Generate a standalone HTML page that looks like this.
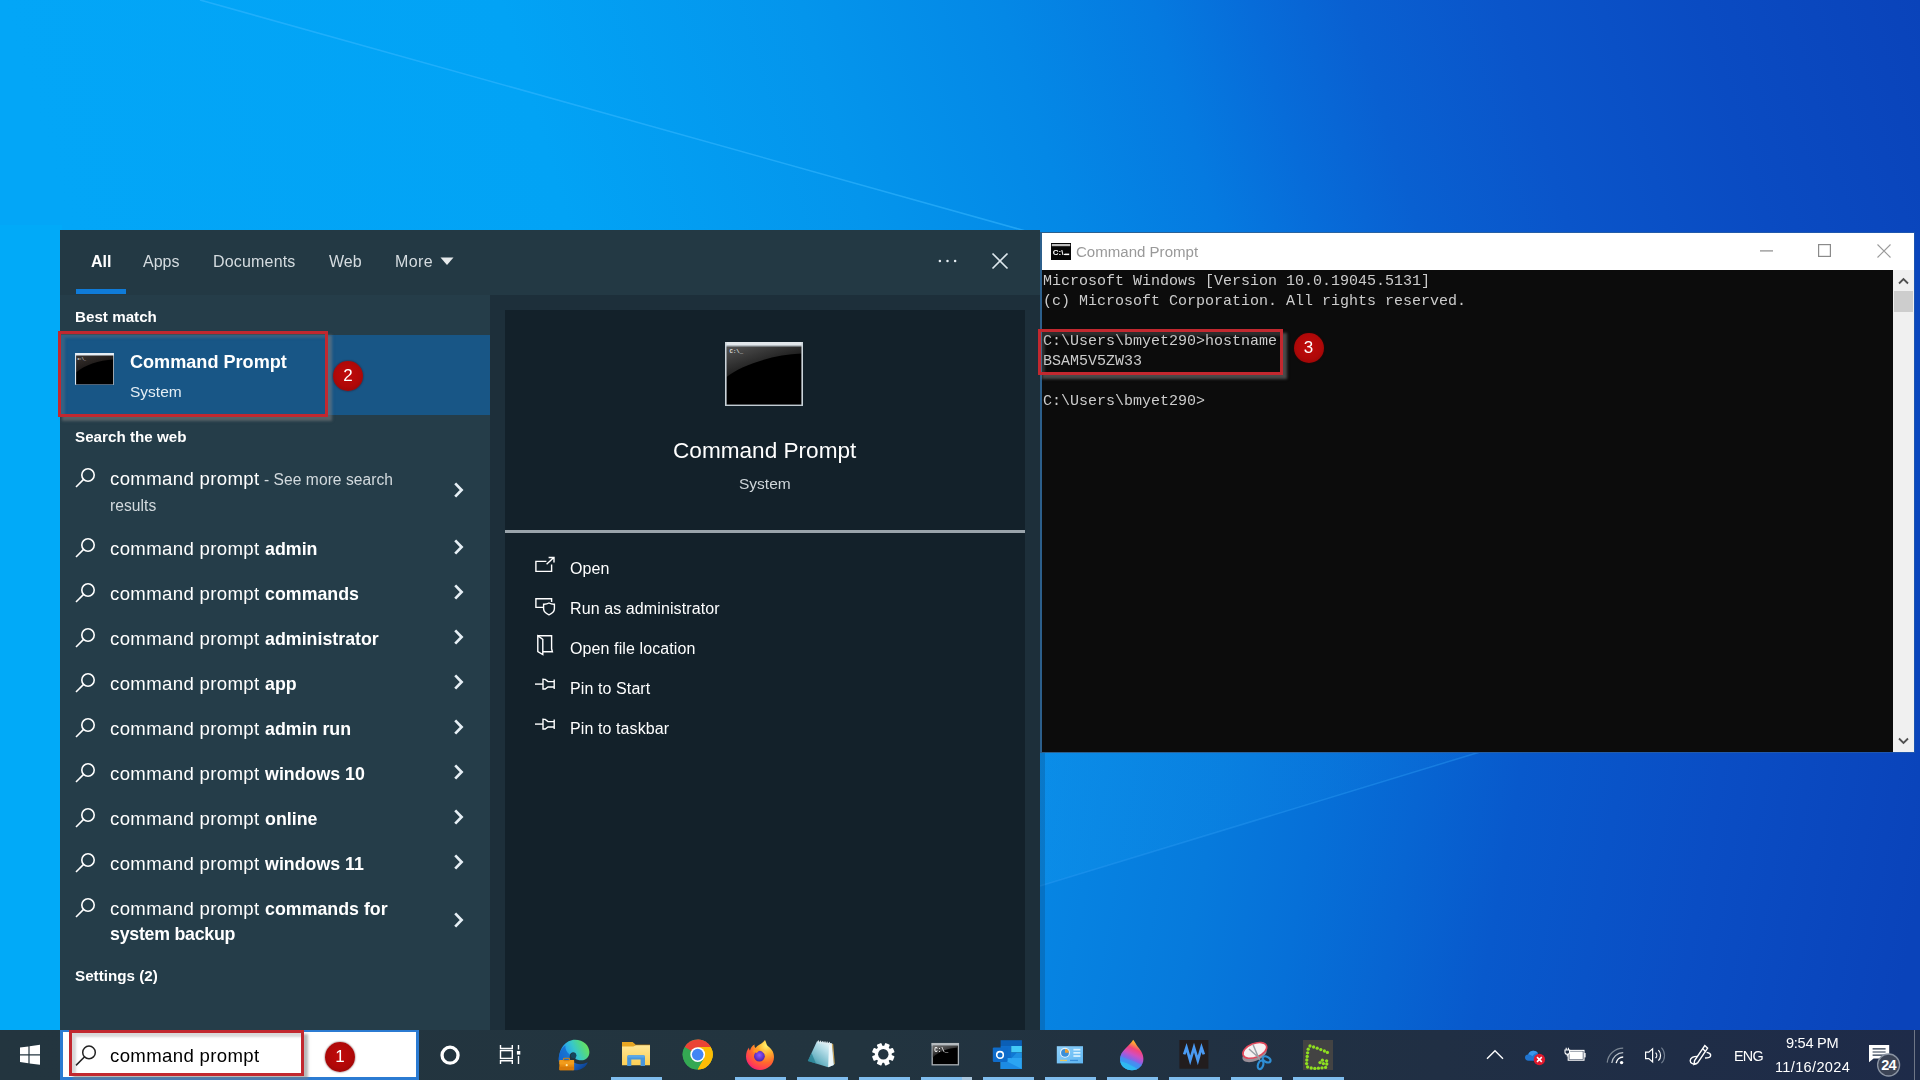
<!DOCTYPE html>
<html lang="en">
<head>
<meta charset="utf-8">
<title>Command Prompt - hostname</title>
<style>
*{box-sizing:border-box;margin:0;padding:0}
html,body{width:1920px;height:1080px;overflow:hidden}
body{font-family:"Liberation Sans",sans-serif;color:#fff;position:relative;background:#0a60d0}
.abs{position:absolute}
.t{position:absolute;white-space:nowrap;line-height:1;will-change:transform}
#wall{position:absolute;left:0;top:0;width:1920px;height:1080px}
/* search panel */
#panel{position:absolute;left:60px;top:230px;width:980px;height:800px;background:#233944}
#leftcol{position:absolute;left:0;top:65px;width:430px;height:735px;background:#253d49}
#rightpane{position:absolute;left:430px;top:65px;width:550px;height:735px;background:#1d2f3a}
#card1{position:absolute;left:445px;top:80px;width:520px;height:220px;background:#13212a}
#card2{position:absolute;left:445px;top:303px;width:520px;height:497px;background:#13212a}
#sep{position:absolute;left:445px;top:300px;width:520px;height:3px;background:#9aa4ab}
#sel{position:absolute;left:0;top:105px;width:430px;height:80px;background:#185686}
#tabline{position:absolute;left:16px;top:59px;width:50px;height:5px;background:#0f7bd8}
.redbox{position:absolute;border:3px solid #c2282f;box-shadow:4px 4px 2.5px rgba(125,125,125,.55),inset 4px 4px 2.5px rgba(125,125,125,.3)}
.badge{position:absolute;width:30px;height:30px;border-radius:50%;background:radial-gradient(circle at 50% 45%,#c00a0a 0,#b00808 55%,#8a0505 100%);color:#fff;font-size:17px;line-height:30px;text-align:center;box-shadow:0 0 2px rgba(60,0,0,.8)}

.b{font-weight:bold}
.tab{margin-top:.5px;font-size:16px;color:#d5dce0}
.tab.b{color:#fff}
.hd{font-size:15.2px;font-weight:bold;color:#fff}
.act{font-size:16px;letter-spacing:.1px;color:#fff}
.sg{font-size:18px;color:#fff}
.see{font-size:15.6px;color:#d3dade;letter-spacing:.05px}
.rg{font-size:18.6px;letter-spacing:.35px}
.sg b{font-size:17.8px}
/* cmd */
#cmd{position:absolute;left:1040px;top:232px;width:875px;height:521px;background:linear-gradient(90deg,#2c5f8b 0,#2a64a0 30%,#1d55b0 100%)}
#cmdtitle{position:absolute;left:2px;top:1px;width:872px;height:37px;background:#fff}
#con{position:absolute;left:2px;top:38px;width:851px;height:482px;background:#0c0c0c}
#sb{position:absolute;left:853px;top:38px;width:21px;height:482px;background:#f0f0f0}
#thumb{position:absolute;left:1px;top:21px;width:19px;height:21px;background:#cdcdcd}
.mono{font-family:"Liberation Mono",monospace;font-size:15px;color:#ccc;position:absolute;left:.5px;margin-top:2px;will-change:transform;white-space:pre;line-height:20px}
/* taskbar */

#tb{position:absolute;left:0;top:1030px;width:1920px;height:50px;background:linear-gradient(90deg,#23353f 0%,#22343f 45%,#202f44 75%,#1e2b49 100%)}
#sbox{position:absolute;left:60px;top:0;width:359px;height:50px;background:#fff;border:3px solid #2b7bd2;border-top-width:2px}
.ico{top:9px;will-change:transform}
.ind{position:absolute;top:47px;height:3px;width:51px;background:#7fbdee}
.tr{color:#fff}
</style>
</head>
<body>
<svg id="wall" viewBox="0 0 1920 1080" preserveAspectRatio="none">
<defs>
<linearGradient id="wg" gradientUnits="userSpaceOnUse" x1="0" y1="0" x2="1759.8" y2="-531.0"><stop offset="0.0000" stop-color="#03a6f7"/><stop offset="0.2604" stop-color="#02a3f5"/><stop offset="0.4167" stop-color="#0495ec"/><stop offset="0.5208" stop-color="#0488e6"/><stop offset="0.5990" stop-color="#057ae0"/><stop offset="0.6510" stop-color="#076cd9"/><stop offset="0.7031" stop-color="#0960d1"/><stop offset="0.7812" stop-color="#0a55ca"/><stop offset="0.8854" stop-color="#0a4bc2"/><stop offset="1.0000" stop-color="#0a43ba"/></linearGradient>
<linearGradient id="wg2" gradientUnits="userSpaceOnUse" x1="0" y1="890" x2="1860.7" y2="1222.3"><stop offset="0.0000" stop-color="#00adf9"/><stop offset="0.4688" stop-color="#0590ea"/><stop offset="0.5417" stop-color="#0685e3"/><stop offset="0.6250" stop-color="#067adc"/><stop offset="0.6771" stop-color="#0670d8"/><stop offset="0.7292" stop-color="#0765d2"/><stop offset="0.7812" stop-color="#0859cc"/><stop offset="0.8854" stop-color="#0a4dc4"/><stop offset="1.0000" stop-color="#0a43ba"/></linearGradient>
<linearGradient id="bm" x1="0" y1="0" x2="1" y2="0"><stop offset="0" stop-color="#22b0ff" stop-opacity=".16"/><stop offset="1" stop-color="#22b0ff" stop-opacity=".05"/></linearGradient>
</defs>
<rect width="1920" height="1080" fill="url(#wg2)"/>
<rect width="1920" height="500" fill="url(#wg)"/>
<rect x="0" y="225" width="62" height="810" fill="#01aaf8"/>
<path d="M200 0L1040 235" stroke="#39b8ff" stroke-opacity=".55" stroke-width="1.6" fill="none"/>
<path d="M1040 752H1480L1040 886Z" fill="url(#bm)"/>
<path d="M1480 752L1040 886" stroke="#2a98f2" stroke-opacity=".45" stroke-width="1.5" fill="none"/>
<rect x="1040" y="752" width="5" height="280" fill="#063a6a" opacity=".25"/>
</svg>

<div id="panel">
 <div id="leftcol"></div>
 <div id="rightpane"></div>
 <div id="card1"></div><div id="sep"></div><div id="card2"></div>
 <div id="sel"></div>
 <div id="tabline"></div>
 <!-- tabs -->
 <span class="t tab b" id="t_all" style="left:31px;top:23px">All</span>
 <span class="t tab" id="t_apps" style="left:83px;top:23px">Apps</span>
 <span class="t tab" id="t_docs" style="left:153px;top:23px;letter-spacing:.18px">Documents</span>
 <span class="t tab" id="t_web" style="left:269px;top:23px">Web</span>
 <span class="t tab" id="t_more" style="left:335px;top:23px;letter-spacing:.4px">More</span>
 <svg class="abs" style="left:380px;top:27px" width="14" height="9" viewBox="0 0 14 9"><path d="M0.5 0.5H13.5L7 8Z" fill="#e6eaec"/></svg>
 <svg class="abs" style="left:877px;top:28px" width="22" height="6" viewBox="0 0 22 6"><circle cx="2.9" cy="3" r="1.25" fill="#e6eef3"/><circle cx="10.5" cy="3" r="1.25" fill="#e6eef3"/><circle cx="18.1" cy="3" r="1.25" fill="#e6eef3"/></svg>
 <svg class="abs" style="left:931px;top:21.8px" width="18" height="18" viewBox="0 0 18 18"><path d="M1.5 1.5L16.5 16.5M16.5 1.5L1.5 16.5" stroke="#dde7ed" stroke-width="1.7" fill="none"/></svg>
 <!-- headers -->
 <span class="t hd" id="h_best" style="left:15px;top:78.5px">Best match</span>
 <span class="t hd" id="h_web" style="left:15px;top:198.5px">Search the web</span>
 <span class="t hd" id="h_set" style="left:15px;top:738px">Settings (2)</span>
 <!-- best match item -->
 <svg class="abs" style="left:14.8px;top:122.6px" width="39.4" height="32.8" viewBox="0 0 39.4 32.8"><defs><linearGradient id="ch1" x1="0" y1="0" x2="0.7" y2="1"><stop offset="0" stop-color="#3b3431"/><stop offset="1" stop-color="#0d0b0a"/></linearGradient></defs><rect width="39.4" height="32.8" fill="#000"/><path d="M1 2H38.4V6.6C24 7.4 9 12.4 1 19.6Z" fill="url(#ch1)"/><rect width="39.4" height="2.5" fill="#e6eef5"/><rect width="1.1" height="32.8" fill="#dbe7f1"/><rect x="38.3" width="1.1" height="32.8" fill="#dbe7f1"/><rect y="31.4" width="39.4" height="1.4" fill="#86a3c0"/><text x="2.4" y="6.9" font-family="Liberation Mono, monospace" font-size="3.6" font-weight="bold" fill="#e8e8e8">C:\_</text></svg>
 <span class="t b" id="bm_title" style="left:70px;top:123px;font-size:18.1px">Command Prompt</span>
 <span class="t" id="bm_sub" style="left:70px;top:154px;font-size:15.5px;color:#e4eef5">System</span>
 <!-- suggestions -->
 <svg class="abs" style="left:15px;top:237.2px" width="21" height="21" viewBox="0 0 21 21"><circle cx="13" cy="8" r="6.2" stroke="#fff" stroke-width="1.6" fill="none"/><path d="M8.6 12.4L1 20" stroke="#fff" stroke-width="1.6" fill="none"/></svg>
 <span class="t sg" id="s0" style="left:50px;top:240.3px"><span class="rg">command prompt</span><span class="see" id="s0b"> - See more search</span></span>
 <span class="t see" id="s0c" style="left:50px;top:268.2px">results</span>
 <svg class="abs" style="left:393px;top:252.4px" width="11" height="16" viewBox="0 0 11 16"><path d="M2.2 1.4L8.6 8L2.2 14.6" stroke="#e6eff5" stroke-width="2.7" fill="none"/></svg>
 <svg class="abs" style="left:15px;top:307.2px" width="21" height="21" viewBox="0 0 21 21"><circle cx="13" cy="8" r="6.2" stroke="#fff" stroke-width="1.6" fill="none"/><path d="M8.6 12.4L1 20" stroke="#fff" stroke-width="1.6" fill="none"/></svg>
 <span class="t sg" id="s1" style="left:50px;top:309.8px"><span class="rg">command prompt </span><b>admin</b></span>
 <svg class="abs" style="left:393px;top:309.4px" width="11" height="16" viewBox="0 0 11 16"><path d="M2.2 1.4L8.6 8L2.2 14.6" stroke="#e6eff5" stroke-width="2.7" fill="none"/></svg>
 <svg class="abs" style="left:15px;top:352.2px" width="21" height="21" viewBox="0 0 21 21"><circle cx="13" cy="8" r="6.2" stroke="#fff" stroke-width="1.6" fill="none"/><path d="M8.6 12.4L1 20" stroke="#fff" stroke-width="1.6" fill="none"/></svg>
 <span class="t sg" id="s2" style="left:50px;top:354.8px"><span class="rg">command prompt </span><b>commands</b></span>
 <svg class="abs" style="left:393px;top:354.4px" width="11" height="16" viewBox="0 0 11 16"><path d="M2.2 1.4L8.6 8L2.2 14.6" stroke="#e6eff5" stroke-width="2.7" fill="none"/></svg>
 <svg class="abs" style="left:15px;top:397.2px" width="21" height="21" viewBox="0 0 21 21"><circle cx="13" cy="8" r="6.2" stroke="#fff" stroke-width="1.6" fill="none"/><path d="M8.6 12.4L1 20" stroke="#fff" stroke-width="1.6" fill="none"/></svg>
 <span class="t sg" id="s3" style="left:50px;top:399.8px"><span class="rg">command prompt </span><b>administrator</b></span>
 <svg class="abs" style="left:393px;top:399.4px" width="11" height="16" viewBox="0 0 11 16"><path d="M2.2 1.4L8.6 8L2.2 14.6" stroke="#e6eff5" stroke-width="2.7" fill="none"/></svg>
 <svg class="abs" style="left:15px;top:442.2px" width="21" height="21" viewBox="0 0 21 21"><circle cx="13" cy="8" r="6.2" stroke="#fff" stroke-width="1.6" fill="none"/><path d="M8.6 12.4L1 20" stroke="#fff" stroke-width="1.6" fill="none"/></svg>
 <span class="t sg" id="s4" style="left:50px;top:444.8px"><span class="rg">command prompt </span><b>app</b></span>
 <svg class="abs" style="left:393px;top:444.4px" width="11" height="16" viewBox="0 0 11 16"><path d="M2.2 1.4L8.6 8L2.2 14.6" stroke="#e6eff5" stroke-width="2.7" fill="none"/></svg>
 <svg class="abs" style="left:15px;top:487.2px" width="21" height="21" viewBox="0 0 21 21"><circle cx="13" cy="8" r="6.2" stroke="#fff" stroke-width="1.6" fill="none"/><path d="M8.6 12.4L1 20" stroke="#fff" stroke-width="1.6" fill="none"/></svg>
 <span class="t sg" id="s5" style="left:50px;top:489.8px"><span class="rg">command prompt </span><b>admin run</b></span>
 <svg class="abs" style="left:393px;top:489.4px" width="11" height="16" viewBox="0 0 11 16"><path d="M2.2 1.4L8.6 8L2.2 14.6" stroke="#e6eff5" stroke-width="2.7" fill="none"/></svg>
 <svg class="abs" style="left:15px;top:532.2px" width="21" height="21" viewBox="0 0 21 21"><circle cx="13" cy="8" r="6.2" stroke="#fff" stroke-width="1.6" fill="none"/><path d="M8.6 12.4L1 20" stroke="#fff" stroke-width="1.6" fill="none"/></svg>
 <span class="t sg" id="s6" style="left:50px;top:534.8px"><span class="rg">command prompt </span><b>windows 10</b></span>
 <svg class="abs" style="left:393px;top:534.4px" width="11" height="16" viewBox="0 0 11 16"><path d="M2.2 1.4L8.6 8L2.2 14.6" stroke="#e6eff5" stroke-width="2.7" fill="none"/></svg>
 <svg class="abs" style="left:15px;top:577.2px" width="21" height="21" viewBox="0 0 21 21"><circle cx="13" cy="8" r="6.2" stroke="#fff" stroke-width="1.6" fill="none"/><path d="M8.6 12.4L1 20" stroke="#fff" stroke-width="1.6" fill="none"/></svg>
 <span class="t sg" id="s7" style="left:50px;top:579.8px"><span class="rg">command prompt </span><b>online</b></span>
 <svg class="abs" style="left:393px;top:579.4px" width="11" height="16" viewBox="0 0 11 16"><path d="M2.2 1.4L8.6 8L2.2 14.6" stroke="#e6eff5" stroke-width="2.7" fill="none"/></svg>
 <svg class="abs" style="left:15px;top:622.2px" width="21" height="21" viewBox="0 0 21 21"><circle cx="13" cy="8" r="6.2" stroke="#fff" stroke-width="1.6" fill="none"/><path d="M8.6 12.4L1 20" stroke="#fff" stroke-width="1.6" fill="none"/></svg>
 <span class="t sg" id="s8" style="left:50px;top:624.8px"><span class="rg">command prompt </span><b>windows 11</b></span>
 <svg class="abs" style="left:393px;top:624.4px" width="11" height="16" viewBox="0 0 11 16"><path d="M2.2 1.4L8.6 8L2.2 14.6" stroke="#e6eff5" stroke-width="2.7" fill="none"/></svg>
 <svg class="abs" style="left:15px;top:667.2px" width="21" height="21" viewBox="0 0 21 21"><circle cx="13" cy="8" r="6.2" stroke="#fff" stroke-width="1.6" fill="none"/><path d="M8.6 12.4L1 20" stroke="#fff" stroke-width="1.6" fill="none"/></svg>
 <span class="t sg" id="s9" style="left:50px;top:669.8px"><span class="rg">command prompt </span><b>commands for</b></span>
 <span class="t sg" id="s9b" style="left:50px;top:694.8px;letter-spacing:-.25px"><b>system backup</b></span>
 <svg class="abs" style="left:393px;top:682.4px" width="11" height="16" viewBox="0 0 11 16"><path d="M2.2 1.4L8.6 8L2.2 14.6" stroke="#e6eff5" stroke-width="2.7" fill="none"/></svg>
 <!-- right pane -->
 <svg class="abs" style="left:665.4px;top:111.6px" width="78" height="64.2" viewBox="0 0 78 64.2"><defs><linearGradient id="ch2" x1="0" y1="0" x2="0.75" y2="1"><stop offset="0" stop-color="#565656"/><stop offset=".6" stop-color="#232323"/><stop offset="1" stop-color="#0c0c0c"/></linearGradient></defs><rect width="78" height="64.2" fill="#000"/><path d="M1.5 3H76.5V11.6C50 12.6 18 22 1.5 35Z" fill="url(#ch2)"/><rect width="78" height="4.2" fill="#e2e7eb"/><rect y="3.4" width="78" height="1" fill="#9aa3aa"/><rect width="1.6" height="64.2" fill="#ccd5db"/><rect x="76.4" width="1.6" height="64.2" fill="#ccd5db"/><rect y="62.6" width="78" height="1.6" fill="#c2ccd3"/><text x="4.6" y="11.4" font-family="Liberation Mono, monospace" font-size="5.6" font-weight="bold" fill="#e0e0e0">C:\_</text></svg>
 <span class="t" id="rp_title" style="left:613px;top:210px;font-size:22.6px">Command Prompt</span>
 <span class="t" id="rp_sub" style="left:679px;top:246px;font-size:15.5px;color:#cfd6da">System</span>

 <!-- action icons -->
 <svg class="abs" style="left:474px;top:326px" width="22" height="17" viewBox="0 0 22 17"><g fill="none" stroke="#fff" stroke-width="1.4"><path d="M12.4 5.4H1.9V15.4H17.6V8.6"/><path d="M12.6 8.2L19.8 1.6M14.6 1.5H20V6.6"/></g></svg>
 <svg class="abs" style="left:474px;top:367px" width="22" height="19" viewBox="0 0 22 19"><g fill="none" stroke="#fff" stroke-width="1.4"><path d="M9.4 10.4H1.9V1.7H17.6V5"/><path d="M15 6C16.6 6.9 18.6 7.3 20.4 7.2V11.6C20.4 14.6 18 16.6 15 17.8C12 16.6 9.6 14.6 9.6 11.6V7.2C11.4 7.3 13.4 6.9 15 6Z"/></g></svg>
 <svg class="abs" style="left:476px;top:404px" width="18" height="22" viewBox="0 0 18 22"><g fill="none" stroke="#fff" stroke-width="1.4" stroke-linejoin="miter"><path d="M1.8 1.8H15.6V14.6L16.4 17.8H6.8"/><path d="M1.8 1.8L6.8 5.4V20.6L1.8 17.6Z"/></g></svg>
 <svg class="abs" style="left:474px;top:448px" width="22" height="13" viewBox="0 0 22 13"><g fill="none" stroke="#fff" stroke-width="1.4"><path d="M1 6.1H9"/><path d="M9 0.6V11.8M9 1.4H11.2L14 3.6H20.2V9H14L11.2 11H9M20.2 1.6V11"/></g></svg>
 <svg class="abs" style="left:474px;top:488px" width="22" height="13" viewBox="0 0 22 13"><g fill="none" stroke="#fff" stroke-width="1.4"><path d="M1 6.1H9"/><path d="M9 0.6V11.8M9 1.4H11.2L14 3.6H20.2V9H14L11.2 11H9M20.2 1.6V11"/></g></svg>
 <span class="t act" id="a1" style="left:510px;top:330.5px">Open</span>
 <span class="t act" id="a2" style="left:510px;top:370.5px">Run as administrator</span>
 <span class="t act" id="a3" style="left:510px;top:410.5px">Open file location</span>
 <span class="t act" id="a4" style="left:510px;top:450.5px">Pin to Start</span>
 <span class="t act" id="a5" style="left:510px;top:490.5px">Pin to taskbar</span>
</div>

<div id="cmd">
 <div id="cmdtitle">
  <svg class="abs" style="left:9px;top:10px;will-change:transform" width="20" height="17" viewBox="0 0 20 17"><rect x="0" y="0" width="20" height="17" fill="#050505"/><rect x="0.8" y="1" width="18.4" height="2.2" fill="#bdbdbd"/><text x="1.8" y="11.6" font-family="Liberation Sans, sans-serif" font-size="8" font-weight="bold" fill="#fff">C:\.</text><rect x="13.6" y="10.6" width="4.6" height="1.5" fill="#fff"/></svg>
  <span class="t" id="cmd_t" style="left:34px;top:11.3px;font-size:15.05px;color:#999">Command Prompt</span>
  <svg class="abs" style="left:718px;top:17px" width="13" height="2" viewBox="0 0 13 2"><rect width="13" height="1.2" y="0.3" fill="#8a8a8a"/></svg>
  <svg class="abs" style="left:776px;top:11px" width="13" height="13" viewBox="0 0 13 13"><rect x="0.6" y="0.6" width="11.8" height="11.8" fill="none" stroke="#8a8a8a" stroke-width="1.2"/></svg>
  <svg class="abs" style="left:835px;top:11px" width="14" height="14" viewBox="0 0 14 14"><path d="M0.5 0.5L13.5 13.5M13.5 0.5L0.5 13.5" stroke="#9a9a9a" stroke-width="1.1" fill="none"/></svg>
 </div>
 <div id="con">
<div class="mono" id="c1" style="top:0">Microsoft Windows [Version 10.0.19045.5131]</div>
<div class="mono" id="c2" style="top:20px">(c) Microsoft Corporation. All rights reserved.</div>
<div class="mono" id="c3" style="top:60px">C:\Users\bmyet290&gt;hostname</div>
<div class="mono" id="c4" style="top:80px">BSAM5V5ZW33</div>
<div class="mono" id="c5" style="top:120px">C:\Users\bmyet290&gt;</div>
 </div>
 <div id="sb"><div id="thumb"></div>
  <svg class="abs" style="left:5px;top:7px" width="11" height="8" viewBox="0 0 11 8"><path d="M1 6.5L5.5 2L10 6.5" stroke="#505050" stroke-width="1.8" fill="none"/></svg>
  <svg class="abs" style="left:5px;top:467px" width="11" height="8" viewBox="0 0 11 8"><path d="M1 1.5L5.5 6L10 1.5" stroke="#505050" stroke-width="1.8" fill="none"/></svg>
 </div>
</div>

<!-- annotations -->
<div class="redbox" style="left:58px;top:331px;width:270px;height:86px"></div>
<div class="badge" style="left:333px;top:361px">2</div>
<div class="redbox" style="left:1038px;top:329px;width:245px;height:46px"></div>
<div class="badge" style="left:1293.6px;top:332.8px">3</div>
<div class="redbox" style="left:69px;top:1029.5px;width:235px;height:46px;z-index:5"></div>
<div class="badge" style="left:325px;top:1042px;z-index:5">1</div>

<div id="tb">
 <!-- start -->
 <svg class="abs" style="left:19px;top:14px" width="22" height="22" viewBox="0 0 22 22"><path d="M1 3.6L9.4 2.4V10.2H1ZM10.6 2.2L21 0.8V10.2H10.6ZM1 11.4H9.4V19.2L1 18ZM10.6 11.4H21V20.8L10.6 19.4Z" fill="#fff"/></svg>
 <!-- search box -->
 <div id="sbox">
  <svg class="abs" style="left:12px;top:12px" width="22" height="22" viewBox="0 0 22 22"><circle cx="14" cy="8.4" r="6.3" stroke="#222" stroke-width="1.5" fill="none"/><path d="M9.6 12.8L1 21.4" stroke="#222" stroke-width="1.5" fill="none"/></svg>
  <span class="t" id="sb_txt" style="left:47px;top:15.2px;font-size:18.6px;letter-spacing:.35px;color:#000">command prompt</span>
 </div>
 <!-- cortana -->
 <svg class="abs" style="left:439px;top:14px" width="22" height="22" viewBox="0 0 22 22"><circle cx="11.05" cy="11.2" r="8" stroke="#fff" stroke-width="3.3" fill="none"/></svg>
 <!-- task view -->
 <svg class="abs" style="left:499px;top:14px" width="23" height="21" viewBox="0 0 23 21"><g fill="none" stroke="#fff" stroke-width="1.4"><path d="M1.5 1V4.5H13.3V1"/><rect x="1.5" y="6.6" width="11.8" height="7.8"/><path d="M1.5 20V16.7H13.3V20"/><path d="M19.5 1V5.6M19.5 12V20"/></g><rect x="17.9" y="7" width="3.4" height="3.6" fill="#fff"/></svg>

 <!-- Edge -->
 <svg class="abs ico" style="left:558px" width="32" height="32" viewBox="0 0 32 32">
  <defs><linearGradient id="eg1" x1="0" y1="0.7" x2="1" y2="0.35"><stop offset="0" stop-color="#1670d2"/><stop offset=".3" stop-color="#2aa6ea"/><stop offset=".55" stop-color="#38c8c8"/><stop offset=".8" stop-color="#52d884"/><stop offset="1" stop-color="#6ee05a"/></linearGradient>
  <linearGradient id="eg2" x1="0" y1="0" x2="1" y2="0.6"><stop offset="0" stop-color="#1d6fd6"/><stop offset="1" stop-color="#0b3d8a"/></linearGradient></defs>
  <path d="M15 22.4C18 25.6 24 26.2 29.8 23.2C28 28 23 31.3 17 31.3L14 31.3Z" fill="url(#eg2)"/>
  <path d="M0.8 22.5C0 9.5 8 0.7 17 0.7C25.5 0.7 31.4 6.5 31.4 13C31.4 18 28 21.3 23.5 21.3C20.5 21.3 18 20.6 17.2 19.2C18.6 17.6 18.8 15.2 17 13.8C14.8 12.4 12 14 11.5 17C11.2 19 12 21 13 22.5Z" fill="url(#eg1)"/>
  <path d="M0.8 22.5C0.4 15 3 9.6 7.4 6.4C7 10 8.6 13 11.8 15.6C11.2 18 12 21 13 22.5Z" fill="#1466cc" opacity=".75"/>
  <circle cx="15.6" cy="16.6" r="2.7" fill="#14465e"/>
  <rect x="1.4" y="21" width="14.7" height="10.2" rx="0.8" fill="#e88c10"/><rect x="1.4" y="21" width="14.7" height="4.6" rx="0.8" fill="#f29c1c"/><rect x="1.4" y="27.6" width="14.7" height="3.6" fill="#d87a08"/>
  <rect x="5.6" y="19.2" width="5.8" height="2.4" rx="0.9" fill="none" stroke="#d8820c" stroke-width="1.1"/><circle cx="8.7" cy="26.2" r="1.1" fill="#ffe9a8"/>
 </svg>
 <!-- File Explorer -->
 <svg class="abs ico" style="left:620px" width="32" height="32" viewBox="0 0 32 32">
  <defs><linearGradient id="fe" x1="0" y1="0" x2="0" y2="1"><stop offset="0" stop-color="#ffe796"/><stop offset="1" stop-color="#fccf54"/></linearGradient></defs>
  <path d="M2 3H12.6L15.6 5.6H30V9H2Z" fill="#e7a622"/>
  <path d="M15.6 5.2H30V6.4H14.6Z" fill="#2a2a20" opacity=".55"/>
  <path d="M2 7.6H13.4L15.8 6.2H30V26.3H2Z" fill="url(#fe)"/>
  <path d="M7.2 27V18.4C7.2 17.1 8 16.3 9.2 16.3H23C24.2 16.3 25 17.1 25 18.4V27H20.6V20.4H11.3V27Z" fill="#4896dc"/>
  <rect x="7.6" y="16.3" width="17" height="2.2" fill="#5aa8ea"/>
 </svg>
 <!-- Chrome -->
 <svg class="abs ico" style="left:682px" width="32" height="32" viewBox="0 0 32 32">
  <circle cx="15.7" cy="15.6" r="15" fill="#34a853"/>
  <path d="M15.7 15.6L2.7 8.1A15 15 0 0 1 28.7 8.1Z" fill="#ea4335"/>
  <path d="M15.7 0.6A15 15 0 0 1 28.7 8.1L15.7 15.6Z" fill="#ea4335"/>
  <path d="M28.7 8.1A15 15 0 0 1 15.7 30.6L22.2 19.3L15.7 15.6Z" fill="#fbbc05"/>
  <path d="M15.7 8.1H28.7A15 15 0 0 1 15.7 30.6L22.2 19.35Z" fill="#fbbc05"/>
  <path d="M2.7 8.1L9.2 19.35L15.7 30.6A15 15 0 0 1 2.7 8.1Z" fill="#34a853"/>
  <circle cx="15.7" cy="15.6" r="7.4" fill="#fff"/><circle cx="15.7" cy="15.6" r="5.8" fill="#4285f4"/>
 </svg>
 <!-- Firefox -->
 <svg class="abs ico" style="left:744px" width="32" height="32" viewBox="0 0 32 32">
  <defs><radialGradient id="fg1" cx="0.72" cy="0.18" r="0.95"><stop offset="0" stop-color="#fff36b"/><stop offset=".3" stop-color="#ffb02e"/><stop offset=".6" stop-color="#ff6a2b"/><stop offset=".85" stop-color="#ff3a57"/><stop offset="1" stop-color="#e31587"/></radialGradient>
  <radialGradient id="fg2" cx="0.5" cy="0.4" r="0.6"><stop offset="0" stop-color="#9059ff"/><stop offset="1" stop-color="#4a1fa8"/></radialGradient></defs>
  <path d="M21 1C22.5 3.5 22.2 5.2 23.5 6.8C26.8 9.2 30 12.5 30 18C30 25.5 23.5 31 16 31C8.2 31 2 25.2 2 17.6C2 14 3 11 5 8.6C5 10 5.4 11 6 11.6C6.5 9 8.2 6.8 10.6 5.6C10.2 7 10.6 8.2 11.6 9C13.6 6 17.5 5.5 21 1Z" fill="url(#fg1)"/>
  <circle cx="15.4" cy="17.2" r="5.4" fill="url(#fg2)"/>
  <path d="M9 12.5C11 10.2 14.5 10 17.2 11.4C15 11.5 13.6 12.6 13 14C11.6 13.4 10.2 13 9 12.5Z" fill="#ff9a1f"/>
  <path d="M18 9.5C20.5 10.5 22.5 13 22.6 16C21.6 14.4 20.2 13.6 18.8 13.4C19.2 12 18.8 10.6 18 9.5Z" fill="#ffbd4f"/>
 </svg>
 <!-- Notepad -->
 <svg class="abs ico" style="left:806px" width="32" height="32" viewBox="0 0 32 32">
  <defs><linearGradient id="ng" x1="0.1" y1="0.9" x2="0.8" y2="0.05"><stop offset="0" stop-color="#2f8a9c"/><stop offset=".3" stop-color="#6fb6c6"/><stop offset=".7" stop-color="#b5dde8"/><stop offset="1" stop-color="#e8f6fa"/></linearGradient></defs>
  <path d="M25.6 4.4L27.2 5L28.8 24.8L27.6 26Z" fill="#c9a55e"/>
  <path d="M11 2.2L25.6 4.2L27.7 26L22.2 28.2L1.8 22Z" fill="url(#ng)"/>
  <path d="M23 5.6L25.6 4.2L27.7 26L22.2 28.2Z" fill="#edf7fa"/>
  <path d="M1.8 22L5.6 14L10 24.6Z" fill="#237f92" opacity=".7"/>
  <path d="M12.4 1.4V4.4M14.6 1.7V4.7M16.8 2V5M19 2.3V5.3M21.2 2.6V5.6M23.4 2.9V5.9" stroke="#dfe9ee" stroke-width="1"/>
 </svg>
 <!-- Settings -->
 <svg class="abs ico" style="left:868px" width="32" height="32" viewBox="0 0 32 32">
  <g transform="translate(15.3 15.3) rotate(22.5)" fill="#fff">
   <rect x="-2.5" y="-11.3" width="5" height="22.6" rx="0.8"/><rect x="-2.5" y="-11.3" width="5" height="22.6" rx="0.8" transform="rotate(45)"/><rect x="-2.5" y="-11.3" width="5" height="22.6" rx="0.8" transform="rotate(90)"/><rect x="-2.5" y="-11.3" width="5" height="22.6" rx="0.8" transform="rotate(135)"/>
   <circle r="8.5"/>
  </g>
  <circle cx="15.3" cy="15.3" r="5.2" fill="#22333f"/>
 </svg>
 <!-- cmd -->
 <svg class="abs ico" style="left:930px" width="32" height="32" viewBox="0 0 32 32">
  <defs><linearGradient id="cg" x1="0.2" y1="0" x2="0.6" y2="0.7"><stop offset="0" stop-color="#6a6a6a"/><stop offset="1" stop-color="#161616"/></linearGradient></defs>
  <rect x="2.2" y="4.6" width="26.2" height="21.2" fill="#000" stroke="#aab1b6" stroke-width="1.3"/>
  <path d="M2.8 6.5H27.8V8.4C18 9 8 13 2.8 18.4Z" fill="url(#cg)"/>
  <rect x="1.6" y="4" width="27.4" height="2.6" fill="#b4babe"/>
  <text x="4.2" y="13.4" font-family="Liberation Mono, monospace" font-size="6.6" font-weight="bold" fill="#fff" textLength="14" lengthAdjust="spacingAndGlyphs">C:\_</text>
 </svg>
 <!-- Outlook -->
 <svg class="abs ico" style="left:992px" width="32" height="32" viewBox="0 0 32 32">
  <rect x="8.6" y="1.2" width="21.3" height="6" fill="#0b5fb6"/>
  <rect x="8.6" y="7" width="10.6" height="12.4" fill="#0f6ecc"/>
  <rect x="19.2" y="7" width="10.7" height="6.4" fill="#43c9f7"/>
  <rect x="19.2" y="13.4" width="10.7" height="6" fill="#1d8fe2"/>
  <rect x="8.6" y="19" width="21.3" height="11" fill="#2ba4f2"/>
  <path d="M8.6 19.2L29.9 30H8.6Z" fill="#1c8be4"/>
  <path d="M19.2 13.4H25L19.2 19.4Z" fill="#0f78d4"/>
  <rect x="0.8" y="8.4" width="14.8" height="14.6" rx="1.2" fill="#0f6cca"/>
  <circle cx="8" cy="15.9" r="3.3" fill="none" stroke="#fff" stroke-width="1.6"/>
 </svg>
 <!-- ID card -->
 <svg class="abs ico" style="left:1054px" width="32" height="32" viewBox="0 0 32 32">
  <defs><linearGradient id="idg" x1="0" y1="0" x2="1" y2="1"><stop offset="0" stop-color="#8ed0fa"/><stop offset="1" stop-color="#5fb6f2"/></linearGradient></defs>
  <rect x="2.8" y="7.2" width="26.2" height="17.2" fill="url(#idg)"/>
  <circle cx="11" cy="13.8" r="5" fill="#e6f3fc"/><circle cx="11" cy="13.8" r="3.9" fill="#3a8fd8"/><path d="M11 13.8V9.9A3.9 3.9 0 0 1 14.9 13.8Z" fill="#f0a030"/>
  <rect x="19.4" y="9.8" width="7" height="1.7" fill="#d8f2ff"/><rect x="19.4" y="13" width="7" height="1.7" fill="#d8f2ff"/><rect x="19.4" y="16.2" width="7" height="1.7" fill="#d8f2ff"/>
  <rect x="6" y="20.8" width="7" height="1.3" fill="#e8c860"/><rect x="16" y="20.8" width="8" height="1.3" fill="#3a8fd8"/>
 </svg>
 <!-- Paint drop -->
 <svg class="abs ico" style="left:1116px" width="32" height="32" viewBox="0 0 32 32">
  <defs><linearGradient id="pg" x1="0.75" y1="0.05" x2="0.3" y2="1"><stop offset="0" stop-color="#ffd81e"/><stop offset=".16" stop-color="#ff9a3a"/><stop offset=".3" stop-color="#f4457c"/><stop offset=".46" stop-color="#d04fc0"/><stop offset=".6" stop-color="#8a62e6"/><stop offset=".74" stop-color="#3f8cf2"/><stop offset="1" stop-color="#2cc4f2"/></linearGradient>
  <clipPath id="pc"><path d="M17.2 0.8C19.5 3.6 20 5.6 22 8C25 11.6 27.4 15 27.4 20C27.4 26.6 22.4 31.2 16 31.2C9.6 31.2 4 26.8 4 20.2C4 12 13 7.6 17.2 0.8Z"/></clipPath></defs>
  <g clip-path="url(#pc)"><rect width="32" height="32" fill="url(#pg)"/>
  <path d="M3 17C9 19 18 22 28 27V32H3Z" fill="#3a9af2" opacity=".55"/>
  <path d="M3 22C9 23 16 26 24 32H3Z" fill="#2cc4f2" opacity=".7"/></g>
 </svg>
 <!-- Wave -->
 <svg class="abs ico" style="left:1178px" width="32" height="32" viewBox="0 0 32 32">
  <rect x="1.4" y="1" width="29" height="28.7" fill="#221d1e"/>
  <path d="M6.2 15.4L8.5 8.6L12.2 21.4L16 8.6L19.8 21.4L23.5 8.6L25.8 15.4" fill="none" stroke="#4a9af2" stroke-width="2.7" stroke-linejoin="miter" stroke-miterlimit="12"/>
 </svg>
 <!-- Snip -->
 <svg class="abs ico" style="left:1240px" width="32" height="32" viewBox="0 0 32 32">
  <ellipse cx="14.5" cy="15.5" rx="12.8" ry="6.4" transform="rotate(-22 14.5 15.5)" fill="#9a8f98"/>
  <ellipse cx="14.8" cy="11.4" rx="12.6" ry="6.8" transform="rotate(-22 14.8 11.4)" fill="#f6f1f2" stroke="#e0475a" stroke-width="1.6"/>
  <path d="M13 5.5L19.5 21M9 10L17.5 17.5" stroke="#9aa0a6" stroke-width="1.5" fill="none"/>
  <ellipse cx="20.6" cy="25.8" rx="2.6" ry="4.4" transform="rotate(18 20.6 25.8)" fill="none" stroke="#2f8fd6" stroke-width="2.2"/>
  <ellipse cx="26.6" cy="20.4" rx="4.2" ry="2.6" transform="rotate(28 26.6 20.4)" fill="none" stroke="#2f8fd6" stroke-width="2.2"/>
 </svg>
 <!-- Greenshot -->
 <svg class="abs ico" style="left:1302px" width="32" height="32" viewBox="0 0 32 32">
  <rect x="1" y="1" width="30" height="30" fill="#434343"/>
  <g fill="#8fe020"><circle cx="8" cy="7" r="1.65"/><circle cx="11.6" cy="8" r="1.65"/><circle cx="15.2" cy="9.2" r="1.65"/><circle cx="18.8" cy="10.6" r="1.65"/><circle cx="22.4" cy="12" r="1.65"/><circle cx="25.4" cy="13.4" r="1.65"/>
  <circle cx="6.2" cy="10.2" r="1.65"/><circle cx="5.6" cy="13.8" r="1.65"/><circle cx="5.2" cy="17.4" r="1.65"/><circle cx="4.8" cy="21" r="1.65"/><circle cx="4.6" cy="24.6" r="1.65"/><circle cx="5.6" cy="28" r="1.65"/>
  <circle cx="9.2" cy="29" r="1.65"/><circle cx="12.8" cy="29.4" r="1.65"/><circle cx="16.4" cy="29.2" r="1.65"/><circle cx="20" cy="28.8" r="1.65"/><circle cx="23.6" cy="28.4" r="1.65"/>
  <circle cx="24.8" cy="25" r="1.65"/><circle cx="21.4" cy="24.6" r="1.65"/><circle cx="18" cy="23.6" r="1.65"/><circle cx="20.4" cy="21.2" r="1.65"/><circle cx="24.6" cy="21.8" r="1.65"/></g>
 </svg>
 <!-- running indicators -->
 <div class="ind" style="left:611px"></div><div class="ind" style="left:735px"></div><div class="ind" style="left:797px"></div><div class="ind" style="left:859px"></div><div class="ind" style="left:921px"></div><div class="ind" style="left:962px;width:10px;background:#a9c6de"></div><div class="ind" style="left:983px"></div><div class="ind" style="left:1045px"></div><div class="ind" style="left:1107px"></div><div class="ind" style="left:1169px"></div><div class="ind" style="left:1231px"></div><div class="ind" style="left:1293px"></div>

 <!-- tray -->
 <svg class="abs" style="left:1486px;top:19px" width="18" height="11" viewBox="0 0 18 11"><path d="M1 9.8L9 1.8L17 9.8" stroke="#fff" stroke-width="1.4" fill="none"/></svg>
 <svg class="abs" style="left:1522px;top:16px" width="26" height="20" viewBox="0 0 26 20"><path d="M6.6 14.8C4.2 14.8 3 13.2 3 11.6C3 9.8 4.4 8.5 6.2 8.6C7 6.2 9 4.8 11.4 4.8C14 4.8 15.8 6.4 16.5 8.6C18.4 8.8 19.6 10.2 19.6 11.8C19.6 13.4 18.4 14.8 16.6 14.8Z" fill="#1f74d0"/><path d="M6.2 8.6C7 6.2 9 4.8 11.4 4.8C13.2 4.8 14.8 5.6 15.8 7C13.4 7 11.6 8.6 10.4 10.2C9.2 9 7.6 8.5 6.2 8.6Z" fill="#3a96ea"/><circle cx="17.4" cy="13.5" r="5.7" fill="#e0192d"/><path d="M15 11.1L19.8 15.9M19.8 11.1L15 15.9" stroke="#fff" stroke-width="1.5"/></svg>
 <svg class="abs" style="left:1564px;top:17px" width="23" height="15" viewBox="0 0 23 15"><rect x="5.4" y="4.4" width="13.4" height="7.8" fill="#fff"/><rect x="4.2" y="3.4" width="15.8" height="9.8" fill="none" stroke="#fff" stroke-width="1.1"/><rect x="20.2" y="6" width="1.4" height="4.4" fill="#fff"/><path d="M2.2 0.8V3M4.4 0.8V3M1 3H5.6V5.2C5.6 6.4 4.6 7.2 3.3 7.2C2 7.2 1 6.4 1 5.2ZM3.3 7.2V9.6" stroke="#fff" stroke-width="1.1" fill="#202e44"/></svg>
 <svg class="abs" style="left:1606px;top:17px" width="19" height="18" viewBox="0 0 19 18"><g fill="none" stroke-linecap="butt"><path d="M1.2 15.6A16 16 0 0 1 17.2 1.2" stroke="#7c8794" stroke-width="1.2"/><path d="M5.8 16A11.6 11.6 0 0 1 17.2 5.6" stroke="#b9c0c8" stroke-width="1.3"/><path d="M10.2 16.2A7.2 7.2 0 0 1 17.2 10" stroke="#fff" stroke-width="1.4"/></g><circle cx="15.6" cy="15.6" r="1.7" fill="#fff"/></svg>
 <svg class="abs" style="left:1644px;top:15px" width="22" height="20" viewBox="0 0 22 20"><path d="M1.6 7.2H4.8L8.6 3.8V17L4.8 13.6H1.6Z" fill="none" stroke="#fff" stroke-width="1.2" stroke-linejoin="miter"/><path d="M11.6 7.6A4 4 0 0 1 11.6 13.2" stroke="#fff" stroke-width="1.2" fill="none"/><path d="M14.4 5.2A7.4 7.4 0 0 1 14.4 15.6" stroke="#fff" stroke-width="1.2" fill="none"/><path d="M17.4 2.6A11.2 11.2 0 0 1 17.4 18.2" stroke="#6f7c8e" stroke-width="1.1" fill="none"/></svg>
 <svg class="abs" style="left:1689px;top:14px" width="23" height="23" viewBox="0 0 23 23"><g fill="none" stroke="#fff" stroke-width="1.4"><path d="M15.8 1.6L18.6 4.2L8.6 19L5 20.4L5.6 16.6Z"/><path d="M13.6 4.8L16.4 7.2"/><path d="M8.8 12.4C4.4 12.2 1.2 14 1.2 16.8C1.2 19.6 4.6 20.6 8 19.6"/><path d="M17.6 8.4C20.4 8.8 22 10.2 21.6 11.8C21.2 13.4 19 14 16 14"/></g></svg>
 <span class="t tr" id="tr_eng" style="left:1733.5px;top:18.5px;font-size:14.4px;letter-spacing:-.75px">ENG</span>
 <span class="t tr" id="tr_time" style="left:1786px;top:6.3px;font-size:14.6px;letter-spacing:-.3px">9:54 PM</span>
 <span class="t tr" id="tr_date" style="left:1775.4px;top:29.6px;font-size:14.6px;letter-spacing:.32px">11/16/2024</span>
 <svg class="abs" style="left:1868px;top:14px" width="34" height="34" viewBox="0 0 34 34"><path d="M1 1H21.2V14.6H5.6L1 18.2Z" fill="#fff"/><path d="M4.6 4.8H17.6M4.6 8H17.6M4.6 11.2H17.6" stroke="#26344a" stroke-width="1.2"/><circle cx="20.6" cy="21" r="11" fill="#3c4456" stroke="#8a93a2" stroke-width="1.3"/><text x="20.6" y="26.4" text-anchor="middle" font-family="Liberation Sans, sans-serif" font-size="14.5" font-weight="bold" fill="#fff" letter-spacing="-0.6">24</text></svg>
 <div class="abs" style="left:1914px;top:0;width:1px;height:50px;background:#6e7686"></div>
</div>
</body>
</html>
